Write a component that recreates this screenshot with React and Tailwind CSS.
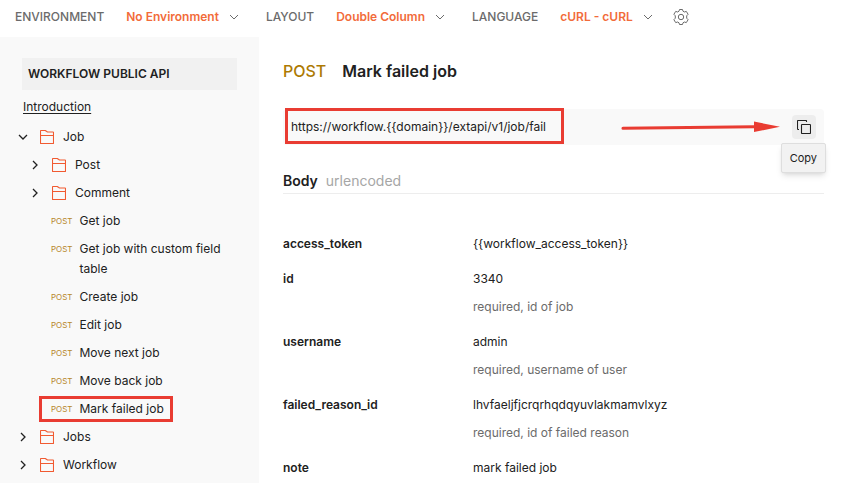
import React from "react";

const params = [
  { name: "access_token", value: "{{workflow_access_token}}" },
  { name: "id", value: "3340", note: "required, id of job" },
  { name: "username", value: "admin", note: "required, username of user" },
  { name: "failed_reason_id", value: "lhvfaeljfjcrqrhqdqyuvlakmamvlxyz", note: "required, id of failed reason" },
  { name: "note", value: "mark failed job" },
];

const requests = [
  "Get job",
  "Get job with custom field table",
  "Create job",
  "Edit job",
  "Move next job",
  "Move back job",
];

function ChevronDown({ className, strokeWidth = 1 }) {
  return (
    <svg className={className} width="10" height="10" viewBox="0 0 10 10" fill="none" stroke="currentColor" strokeWidth={strokeWidth} aria-hidden="true">
      <path d="M1 3l4 4 4-4" />
    </svg>
  );
}

function ChevronRight() {
  return (
    <svg width="10" height="10" viewBox="0 0 10 10" fill="none" stroke="currentColor" strokeWidth="1.3" aria-hidden="true">
      <path d="M3 1l4 4-4 4" />
    </svg>
  );
}

function FolderIcon() {
  return (
    <svg className="shrink-0 text-[#f15a31]" width="14" height="14" viewBox="0 0 14 14" fill="none" stroke="currentColor" strokeWidth="1.1" strokeLinejoin="round" aria-hidden="true">
      <path d="M.5 13V1a.5.5 0 0 1 .5-.5h4.300L7.500 2H13a.5.5 0 0 1 .5.5V13a.5.5 0 0 1-.5.5H1a.5.5 0 0 1-.5-.5zM.5 5.500h13" />
    </svg>
  );
}

function GearIcon() {
  return (
    <svg width="16" height="16" viewBox="0 0 16 16" fill="none" stroke="currentColor" strokeLinejoin="round" aria-hidden="true">
      <path d="M6.500.5h3l.5 1.700 1.300.8 2-.6 1.800 2.900-1.400 1.500v2.400l1.400 1.500-1.800 2.900-2-.6-1.300.8-.5 1.700h-3L6 13.800 4.700 13l-2 .6L.9 10.700l1.400-1.500V6.800L.9 5.300l1.800-2.900 2 .6L6 2.200z" />
      <circle cx="8" cy="8" r="2.700" />
    </svg>
  );
}

function CopyIcon() {
  return (
    <svg width="14" height="14" viewBox="0 0 14 14" fill="none" stroke="currentColor" strokeWidth="1.1" aria-hidden="true">
      <rect x="4.500" y="4.500" width="9" height="9" rx=".6" />
      <path d="M2 9.500h-.900a.6.6 0 0 1-.6-.6V1.100a.6.6 0 0 1 .6-.6h7.800a.6.6 0 0 1 .6.6V2" />
    </svg>
  );
}

function Setting({ id, label, value }) {
  return (
    <div className="flex items-center gap-[22px]">
      <label htmlFor={id} className="font-medium text-[#6b6b6b]">{label}</label>
      <div className="relative flex items-center text-[#6b6b6b]">
        <select id={id} className="field-sizing-content appearance-none bg-transparent pr-5 font-semibold text-[#f26b3a]">
          <option>{value}</option>
        </select>
        <ChevronDown className="pointer-events-none absolute right-0" />
      </div>
    </div>
  );
}

function Folder({ name, open, nested }) {
  return (
    <li>
      <button type="button" aria-expanded={Boolean(open)} className={`flex h-7 w-full items-center gap-3 ${nested ? "pl-[30px]" : "pl-[18px]"}`}>
        {open ? <ChevronDown strokeWidth={1.3} /> : <ChevronRight />}
        <span className="flex items-center gap-[9px]">
          <FolderIcon />
          <span>{name}</span>
        </span>
      </button>
    </li>
  );
}

function RequestLink({ name, marked }) {
  return (
    <li className="relative pl-[51px]">
      <a href="#request" className="flex gap-[7px] py-1 pr-6 leading-5">
        <span className="shrink-0 text-[8px] text-[#b7872b]">POST</span>
        <span>{name}</span>
      </a>
      {marked && <span className="pointer-events-none absolute inset-y-px left-[39px] w-[134px] border-3 border-[#e93c32]" />}
    </li>
  );
}

export default function App() {
  return (
    <div className="flex min-h-screen flex-col bg-white font-[Inter,sans-serif] text-[12px] leading-5 text-[#212121]">
      <header className="flex h-[37px] items-center gap-[27px] pb-1 pl-[15px]">
        <Setting id="environment" label="ENVIRONMENT" value="No Environment" />
        <Setting id="layout" label="LAYOUT" value="Double Column" />
        <div className="flex items-center gap-5">
          <Setting id="language" label="LANGUAGE" value="cURL - cURL" />
          <button type="button" aria-label="Settings" className="text-[#6b6b6b]"><GearIcon /></button>
        </div>
      </header>

      <div className="flex grow">
        <nav className="w-[259px] shrink-0 bg-[#f9f9f9] pt-[21px]">
          <h2 className="mx-[22px] bg-[#f1f1f1] p-1.5 font-semibold">WORKFLOW PUBLIC API</h2>
          <a href="#introduction" className="ml-[23px] mt-[7px] inline-block underline underline-offset-2">Introduction</a>
          <ul className="mt-[6px]">
            <Folder name="Job" open />
            <Folder name="Post" nested />
            <Folder name="Comment" nested />
            {requests.map((name) => <RequestLink key={name} name={name} />)}
            <RequestLink name="Mark failed job" marked />
            <Folder name="Jobs" />
            <Folder name="Workflow" />
          </ul>
        </nav>

        <main className="min-w-0 grow pl-6 pr-[22px] pt-[22px]">
          <h1 className="flex gap-4 text-[16px] leading-6 font-semibold">
            <span className="font-medium text-[#ad7a03]">POST</span>
            <span>Mark failed job</span>
          </h1>

          <div className="relative mt-[26px] flex h-9 items-center justify-between rounded-sm bg-[#f9f9f9] px-2">
            <span>{"https://workflow.{{domain}}/extapi/v1/job/fail"}</span>
            <div className="pointer-events-none absolute -top-px left-[2px] h-9 w-[279px] border-3 border-[#e93c32]" />
            <div className="flex items-center gap-3">
              <svg width="160" height="12" viewBox="0 0 160 12" fill="#e93c32" aria-hidden="true">
                <path d="M3 5.700L134 4.300V.500L160 5.800 134 11V7.300L3 8.800a1.500 1.500 0 0 1 0-3.100z" />
              </svg>
              <button type="button" aria-label="Copy" className="flex size-6 items-center justify-center rounded-sm bg-[#ededed]"><CopyIcon /></button>
            </div>
            <div role="tooltip" className="absolute top-[34px] -right-0.5 rounded-xs border border-[#dedede] bg-[#f2f2f2] px-2 py-1 text-[11px] shadow-md">Copy</div>
          </div>

          <h2 className="mt-[26px] flex items-center gap-2 border-b border-[#ededed] pb-0.5 text-[14px] font-semibold">
            Body
            <span className="font-normal text-[#a6a6a6]">urlencoded</span>
          </h2>

          <table className="mt-10 w-full table-fixed text-left">
            <tbody>
              {params.map((p) => (
                <tr key={p.name} className="align-top">
                  <th scope="row" className="w-[190px] font-semibold">{p.name}</th>
                  <td className="pb-[15px]">
                    <p>{p.value}</p>
                    {p.note && <p className="mt-2 text-[#6b6b6b]">{p.note}</p>}
                  </td>
                </tr>
              ))}
            </tbody>
          </table>
        </main>
      </div>
    </div>
  );
}
